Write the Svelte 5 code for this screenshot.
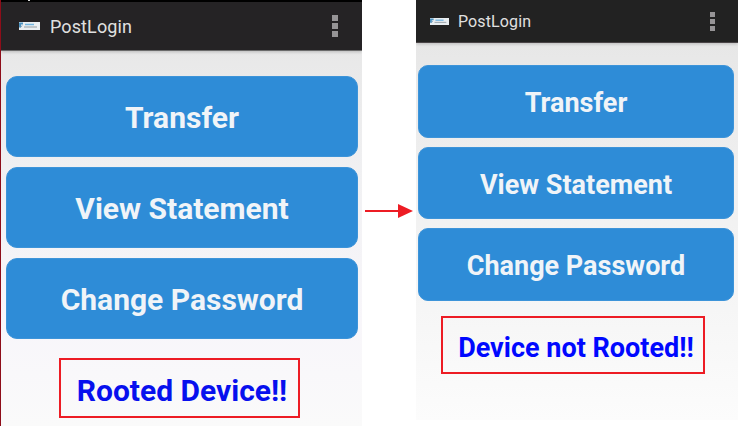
<script>
  const labels = ['Transfer', 'View Statement', 'Change Password'];
  const screens = [
    { kind: 'rooted', status: 'Rooted Device!!' },
    { kind: 'clean', status: 'Device not Rooted!!' }
  ];
</script>

{#snippet phone(s)}
  <section class="phone {s.kind}">
    {#if s.kind === 'rooted'}<div class="system"><i></i></div>{/if}
    <header>
      <svg class="logo" viewBox="0 0 21 8" preserveAspectRatio="none">
        <rect width="21" height="8" fill="#e9eef1" />
        <path d="M0 .5h4v2H2v3H0z" fill="#4c91bf" />
        <path d="M1.5 5.5l1.5-2" stroke="#7b9db5" />
        <path d="M6 2.5h9" stroke="#72b4df" stroke-width="1.5" />
        <path d="M5 5h13" stroke="#939ca2" stroke-width="1" />
      </svg>
      <span class="title">PostLogin</span>
      <div class="menu"><i></i><i></i><i></i></div>
    </header>
    <main>
      {#each labels as label}
        <button>{label}</button>
      {/each}
      <div class="status"><span>{s.status}</span></div>
    </main>
  </section>
{/snippet}

<div class="page">
  {@render phone(screens[0])}
  <svg class="arrow" width="54" height="16" viewBox="0 0 54 16">
    <path d="M3 8h34" stroke="#ed1c24" stroke-width="2" />
    <path d="M36 1l15 7-15 7z" fill="#ed1c24" />
  </svg>
  {@render phone(screens[1])}
</div>

<style>
  .page {
    display: flex;
    align-items: flex-start;
    width: 740px;
    height: 426px;
    overflow: hidden;
    background: #fff;
    font-family: Roboto, sans-serif;
  }
  .phone { box-sizing: border-box; flex: none; overflow: hidden; }
  .rooted {
    width: 362px;
    height: 426px;
    border-left: 1px solid #8e0d19;
    background: linear-gradient(#e8e8e8 50px, #f1f1f3 180px, #f8f6fa 320px, #fafafa);
  }
  .clean {
    width: 322px;
    height: 420px;
    background: linear-gradient(#e7e7e7 43px, #f0f0f0 180px, #f6f6f6 310px, #fcfcfc);
  }
  .system { height: 2px; background: #000; }
  .system i { display: block; width: 2px; height: 1px; margin-left: 27px; background: #ddd; }
  header { display: flex; align-items: center; box-sizing: border-box; }
  .rooted header {
    height: 49px;
    padding: 0 24px 0 18px;
    background: #252325;
    border-bottom: 1px solid #6b6b6b;
    box-shadow: 0 1px 3px #0003;
  }
  .clean header {
    height: 43px;
    padding: 0 23px 0 14px;
    background: #222;
    border-bottom: 1px solid #4a4547;
    box-shadow: 0 1px 3px #0003;
  }
  .logo { flex: none; width: 21px; height: 8px; }
  .clean .logo { width: 19px; height: 7px; }
  .title { flex: 1; margin-left: 10px; padding-top: 1px; font-size: 18px; letter-spacing: 0.1px; color: #e0e0e0; }
  .clean .title { margin-left: 9px; font-size: 16px; letter-spacing: 0.12px; }
  .menu { display: flex; flex-direction: column; gap: 2px; }
  .menu i { width: 6px; height: 6px; background: #969496; }
  .clean .menu i { width: 5px; height: 5px; }
  main { display: flex; flex-direction: column; }
  .rooted main { gap: 10px; padding: 24.5px 4px 0 5px; }
  .clean main { gap: 9px; padding: 22px 4px 0 2px; }
  button {
    display: flex;
    align-items: center;
    justify-content: center;
    box-sizing: border-box;
    border: 1px solid #3d94d9;
    padding: 0;
    background: #2e8cd7;
    color: #f0f4f8;
    font: 700 30px Roboto, sans-serif;
    white-space: nowrap;
  }
  .rooted button { height: 81px; border-radius: 11px; padding-top: 3px; }
  .clean button { height: 72.5px; border-radius: 10px; padding-top: 4px; font-size: 27px; }
  .status {
    box-sizing: border-box;
    border: 2px solid #ed1c24;
    display: flex;
    align-items: center;
    justify-content: center;
    color: #0710ee;
    font-weight: 700;
    white-space: nowrap;
  }
  .rooted .status { width: 241px; height: 60px; margin: 9.5px 0 0 53px; font-size: 30px; padding: 4px 0 0 5px; }
  .clean .status { width: 264px; height: 58px; margin: 6px 0 0 23px; font-size: 27px; padding: 6px 0 0 6px; color: #0008ff; }
  .arrow { flex: none; margin-top: 203px; }
</style>
